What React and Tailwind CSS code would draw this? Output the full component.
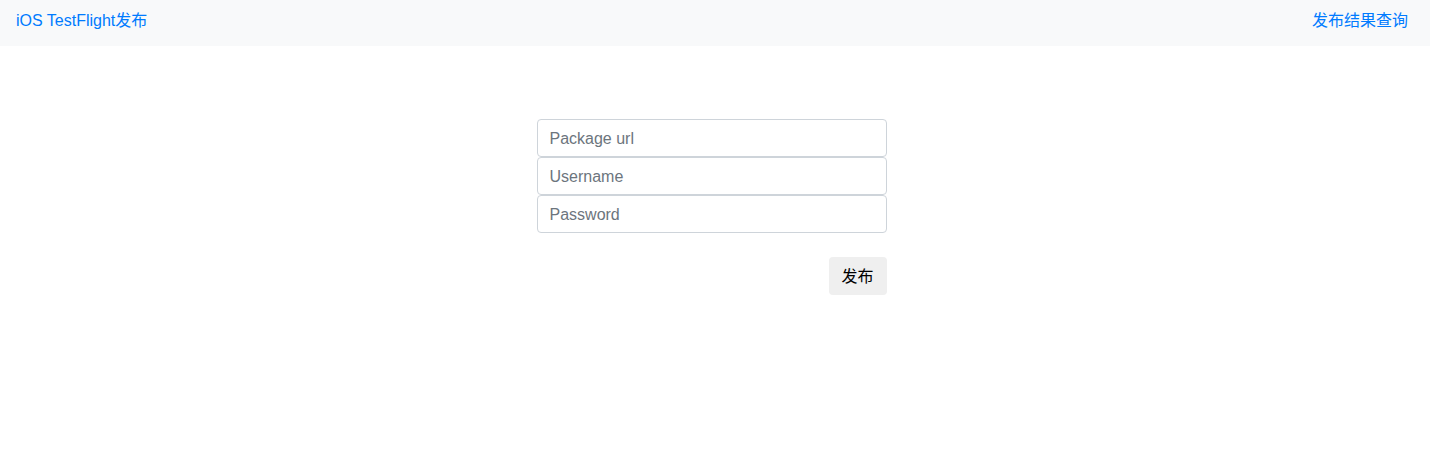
import React from 'react'

const FONT = "font-['Liberation_Sans','Noto_Sans_CJK_SC',sans-serif]"

const App = () => {
  return (
    <div className={`min-h-screen bg-white ${FONT} text-base`}>
      {/* top bar */}
      <nav className="h-[46px] bg-[#f8f9fa] px-4 pt-[9px] flex justify-between items-start">
        <a className="text-[#007bff] leading-6 pr-2">iOS TestFlight发布</a>
        <a className="text-[#007bff] leading-6 pr-[6px]">发布结果查询</a>
      </nav>

      {/* form */}
      <div className="flex justify-center pt-[73px] pr-[7px]">
        <form className="w-[350px] flex flex-col" onSubmit={(e) => e.preventDefault()}>
          <input
            type="text"
            placeholder="Package url"
            className="h-[38px] px-3 pt-[2px] border border-[#ced4da] rounded text-[#495057] placeholder:text-[#6c757d] outline-none"
          />
          <input
            type="text"
            placeholder="Username"
            className="h-[38px] px-3 pt-[2px] border border-[#ced4da] rounded text-[#495057] placeholder:text-[#6c757d] outline-none"
          />
          <input
            type="password"
            placeholder="Password"
            className="h-[38px] px-3 pt-[2px] border border-[#ced4da] rounded text-[#495057] placeholder:text-[#6c757d] outline-none"
          />
          <div className="flex justify-end mt-6">
            <button type="submit" className="h-[38px] w-[58px] pt-[2px] bg-[#efefef] rounded text-black leading-6">
              发布
            </button>
          </div>
        </form>
      </div>
    </div>
  )
}

export default App
